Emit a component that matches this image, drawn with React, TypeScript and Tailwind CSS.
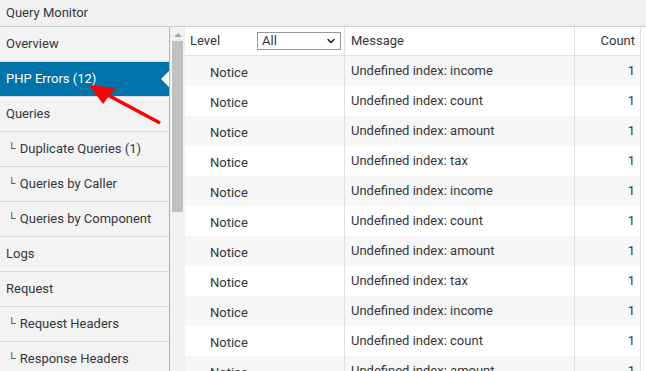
import { ChevronDown } from "lucide-react";

const navItems = [
  { label: "Overview" },
  { label: "PHP Errors (12)", active: true },
  { label: "Queries" },
  { label: "Duplicate Queries (1)", sub: true },
  { label: "Queries by Caller", sub: true },
  { label: "Queries by Component", sub: true },
  { label: "Logs" },
  { label: "Request" },
  { label: "Request Headers", sub: true },
  { label: "Response Headers", sub: true },
];

const messages = ["income", "count", "amount", "tax", "income", "count", "amount", "tax", "income", "count", "amount"];

export default function App() {
  return (
    <div className="relative w-[646px] h-[371px] overflow-hidden bg-white text-[13px] text-[#32373c] font-['Roboto',sans-serif]">
      <div className="h-[27px] flex items-center px-[6px] bg-[#f1f1f1] border-b border-[#cccccc]">
        Query Monitor
      </div>

      <div className="flex">
        <nav className="w-[170px] shrink-0 bg-[#f3f3f3] border-r border-[#b4b4b4]">
          {navItems.map((item) => (
            <div
              key={item.label}
              className={
                item.active
                  ? "relative h-[35px] flex items-center px-[6px] bg-[#0073aa] text-white border-b border-[#dddddd]"
                  : "relative h-[35px] flex items-center px-[6px] border-b border-[#dddddd]"
              }
            >
              {item.sub && <span className="ml-[2px] mr-[4px] text-[11px]">└</span>}
              {item.label}
              {item.active && (
                <span className="absolute right-0 top-[9px] w-0 h-0 border-y-[8px] border-y-transparent border-r-[8px] border-r-white" />
              )}
            </div>
          ))}
        </nav>

        <div className="w-[15px] shrink-0 bg-[#f1f1f1] flex flex-col items-center pt-[6px]">
          <span className="w-0 h-0 border-x-[4px] border-x-transparent border-b-[4px] border-b-[#a3a3a3]" />
          <div className="mt-[4px] w-[11px] h-[171px] bg-[#c1c1c1]" />
        </div>

        <div className="w-[456px] shrink-0">
          <div className="flex h-[29px] bg-white border-b border-[#e0e0e0]">
            <div className="w-[160px] flex items-center pl-[5px] border-r border-[#e0e0e0]">
              <span className="w-[67px]">Level</span>
              <div className="w-[84px] h-[18px] flex items-center justify-between pl-[4px] pr-[3px] border border-[#999999] bg-white">
                <span>All</span>
                <ChevronDown size={12} strokeWidth={3} className="text-[#222]" />
              </div>
            </div>
            <div className="w-[230px] flex items-center pl-[6px] border-r border-[#e0e0e0]">Message</div>
            <div className="w-[66px] flex items-center justify-end pr-[5px] border-r border-[#e0e0e0]">Count</div>
          </div>
          {messages.map((m, i) => (
            <div key={i} className={i % 2 === 0 ? "flex h-[30px] bg-[#f7f7f7]" : "flex h-[30px] bg-white"}>
              <div className="w-[160px] pl-[25px] pt-[7px] border-r border-[#e0e0e0]">Notice</div>
              <div className="w-[230px] pl-[6px] pt-[5px] border-r border-[#e0e0e0]">Undefined index: {m}</div>
              <div className="w-[66px] pr-[5px] pt-[5px] text-right border-r border-[#e0e0e0]">1</div>
            </div>
          ))}
        </div>
      </div>

      <svg className="absolute left-0 top-0 pointer-events-none" width="646" height="371">
        <line x1="160" y1="123" x2="104" y2="93" stroke="#ff0000" strokeWidth="3.5" />
        <polygon points="89,85 115,88 103,104" fill="#ff0000" />
      </svg>
    </div>
  );
}
